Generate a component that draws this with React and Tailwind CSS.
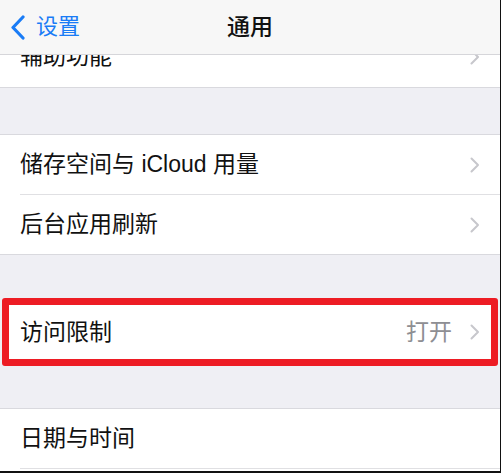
import React from "react";

const Chevron = () => (
  <svg width="10" height="16" viewBox="0 0 10 16" className="shrink-0">
    <polyline points="1.5,1.5 8,8 1.5,14.5" fill="none" stroke="#c7c7cc" strokeWidth="2" strokeLinecap="round" strokeLinejoin="round" />
  </svg>
);

function Row({ label, value, sep }) {
  return (
    <div className="bg-white">
      <div className="h-[59px] flex items-center pl-5 pr-5">
        <span className="flex-1 text-[23px] text-[#111]">{label}</span>
        {value && <span className="text-[23px] text-[#8e8e93] mr-[18px]">{value}</span>}
        <Chevron />
      </div>
      {sep && <div className="ml-5 h-px bg-[#e0e0e3]" />}
    </div>
  );
}

export default function App() {
  return (
    <div className="w-[501px] h-[473px] flex flex-col bg-[#efeff4] border-r border-b-2 border-[#111] overflow-hidden font-['Liberation_Sans','Noto_Sans_CJK_SC',sans-serif]">
      <div className="h-[55px] shrink-0 bg-[#f7f7f7] border-b border-[#d6d6da] flex items-center relative">
        <div className="flex items-center pl-[10px] gap-[11px] text-[#1a7cf6]">
          <svg width="15" height="25" viewBox="0 0 15 25">
            <polyline points="13,2 3,12.5 13,23" fill="none" stroke="#1a7cf6" strokeWidth="3.2" strokeLinecap="round" strokeLinejoin="round" />
          </svg>
          <span className="text-[22px] leading-none">设置</span>
        </div>
        <span className="absolute left-1/2 -translate-x-1/2 text-[23px] font-medium text-[#111] leading-none">通用</span>
      </div>

      <div className="h-[33px] shrink-0 overflow-hidden bg-white border-b border-[#d9d9de]">
        <div className="-mt-[28px]">
          <Row label="辅助功能" />
        </div>
      </div>

      <div className="h-[46px] shrink-0" />

      <div className="shrink-0 border-t border-b border-[#d9d9de]">
        <Row label="储存空间与 iCloud 用量" sep />
        <Row label="后台应用刷新" />
      </div>

      <div className="h-[43px] shrink-0" />

      <div className="h-[68px] shrink-0 mx-[2px] border-[7px] border-[#ed1c24] rounded-[3px] bg-white flex items-center pl-[11px] pr-[11px]">
        <span className="flex-1 text-[23px] text-[#111]">访问限制</span>
        <span className="text-[23px] text-[#8e8e93] mr-[18px]">打开</span>
        <Chevron />
      </div>

      <div className="h-[42px] shrink-0" />

      <div className="flex-1 border-t border-[#d9d9de] bg-white">
        <div className="h-[59px] flex items-center pl-5">
          <span className="text-[23px] text-[#111]">日期与时间</span>
        </div>
        <div className="ml-5 h-px bg-[#e0e0e3]" />
      </div>
    </div>
  );
}
